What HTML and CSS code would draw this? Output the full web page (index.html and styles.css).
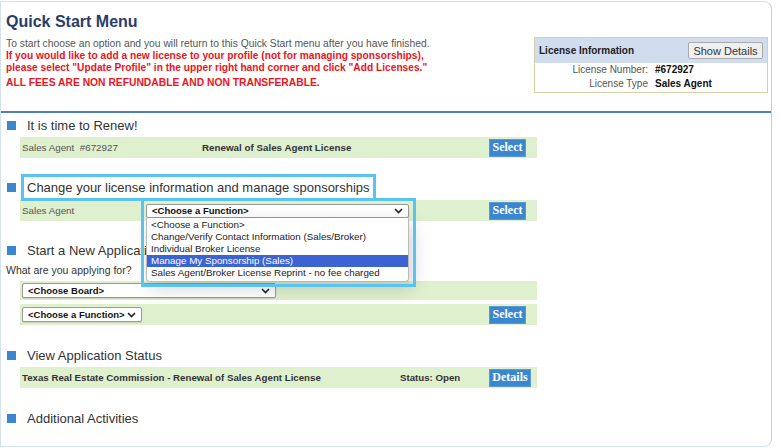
FILE: index.html
```html
<!DOCTYPE html>
<html lang="en">
<head>
  <meta charset="UTF-8">
  <title>Quick Start Menu</title>
  <link rel="stylesheet" href="styles.css">
</head>
<body>
  <div class="panel">
    <div class="top">
      <div class="intro">
        <h1>Quick Start Menu</h1>
        <p class="note">To start choose an option and you will return to this Quick Start menu after you have finished.</p>
        <p class="warn">If you would like to add a new license to your profile (not for managing sponsorships),<br>please select "Update Profile" in the upper right hand corner and click "Add Licenses."</p>
        <p class="warn fees">ALL FEES ARE NON REFUNDABLE AND NON TRANSFERABLE.</p>
      </div>
      <div class="lic-box">
        <div class="lic-head">
          <span>License Information</span>
          <button class="btn-gray">Show Details</button>
        </div>
        <div class="lic-row"><span class="lic-label">License Number:</span><span class="lic-val">#672927</span></div>
        <div class="lic-row"><span class="lic-label">License Type</span><span class="lic-val">Sales Agent</span></div>
      </div>
    </div>

    <!-- Renew -->
    <div class="section first">
      <h2><span class="sq"></span>It is time to Renew!</h2>
      <div class="row">
        <span class="c1">Sales Agent&nbsp;&nbsp;#672927</span>
        <span class="c2 bold">Renewal of Sales Agent License</span>
        <button class="btn-blue">Select</button>
      </div>
    </div>

    <!-- Change license info -->
    <div class="section">
      <h2><span class="sq"></span><span class="hl">Change your license information and manage sponsorships</span></h2>
      <div class="row push">
        <span class="c1 short">Sales Agent</span>
        <div class="pick-wrap">
          <div class="pick wide"><span>&lt;Choose a Function&gt;</span><svg width="9" height="6" viewBox="0 0 9 6"><path d="M1 1l3.5 3.5L8 1" fill="none" stroke="#222" stroke-width="1.6"/></svg></div>
          <ul class="drop">
            <li>&lt;Choose a Function&gt;</li>
            <li>Change/Verify Contact Information (Sales/Broker)</li>
            <li>Individual Broker License</li>
            <li class="on">Manage My Sponsorship (Sales)</li>
            <li>Sales Agent/Broker License Reprint - no fee charged</li>
          </ul>
          <div class="hl-box"></div>
        </div>
        <span class="c2"></span>
        <button class="btn-blue">Select</button>
      </div>
    </div>

    <!-- New application -->
    <div class="section">
      <h2><span class="sq"></span>Start a New Application</h2>
      <p class="ask">What are you applying for?</p>
      <div class="row thin">
        <div class="pick board"><span>&lt;Choose Board&gt;</span><svg width="9" height="6" viewBox="0 0 9 6"><path d="M1 1l3.5 3.5L8 1" fill="none" stroke="#222" stroke-width="1.6"/></svg></div>
      </div>
      <div class="row gap">
        <div class="pick func"><span>&lt;Choose a Function&gt;</span><svg width="9" height="6" viewBox="0 0 9 6"><path d="M1 1l3.5 3.5L8 1" fill="none" stroke="#222" stroke-width="1.6"/></svg></div>
        <span class="c2"></span>
        <button class="btn-blue">Select</button>
      </div>
    </div>

    <!-- Status -->
    <div class="section spaced">
      <h2><span class="sq"></span>View Application Status</h2>
      <div class="row">
        <span class="c-app bold">Texas Real Estate Commission - Renewal of Sales Agent License</span>
        <span class="c-status bold">Status: Open</span>
        <button class="btn-blue details">Details</button>
      </div>
    </div>

    <div class="section spaced">
      <h2><span class="sq"></span>Additional Activities</h2>
    </div>
  </div>
</body>
</html>
```

FILE: styles.css
```css
body {
  margin: 0;
  background-color: #fff;
  font-family: "Liberation Sans", Arial, sans-serif;
  color: #333;
}
.panel {
  width: 770px;
  height: 444px;
  margin-top: 1px;
  border: 1px solid #d3e2ee;
  border-right-color: #c7ced6;
  border-radius: 0 8px 8px 0;
}
.top {
  display: flex;
  justify-content: space-between;
  height: 109px;
  border-bottom: 2px solid #4f7fb3;
}
.intro {
  padding-left: 5px;
}
h1 {
  margin: 11px 0 0;
  font-size: 16px;
  line-height: 18px;
  color: #2a3d6a;
}
.note {
  margin: 7px 0 0;
  font-size: 10.3px;
  line-height: 12px;
  color: #555;
}
.warn {
  margin: 0;
  font-size: 10.2px;
  line-height: 11.5px;
  font-weight: bold;
  color: #ec1420;
}
.fees {
  margin-top: 4px;
  font-size: 10.3px;
}
.lic-box {
  width: 232px;
  height: 54px;
  margin: 35px 3px 0 0;
  border: 1px solid #d9d0a6;
  font-size: 10px;
}
.lic-head {
  display: flex;
  justify-content: space-between;
  align-items: center;
  height: 25px;
  padding: 0 4px 0 4px;
  background-color: #cfddef;
  font-weight: bold;
  color: #222;
}
.btn-gray {
  width: 75px;
  height: 17px;
  padding: 0;
  border: 1px solid #aaa;
  border-radius: 2px;
  background-color: #efefef;
  font-family: "Liberation Sans", Arial, sans-serif;
  font-size: 11px;
  color: #333;
}
.lic-row {
  display: flex;
  height: 14px;
  line-height: 14px;
}
.lic-label {
  width: 113px;
  text-align: right;
  color: #555;
}
.lic-val {
  margin-left: 7px;
  font-weight: bold;
  color: #111;
}
.section {
  margin-top: 20px;
}
.section.first {
  margin-top: 3px;
}
.section.spaced {
  margin-top: 21px;
}
h2 {
  display: flex;
  align-items: center;
  margin: 0 0 3px;
  height: 18px;
  font-size: 13px;
  font-weight: normal;
  color: #333;
}
.sq {
  width: 9px;
  height: 9px;
  margin: 0 11px 0 6px;
  background-color: #3a86d1;
}
.hl {
  position: relative;
  z-index: 2;
  outline: 3px solid #5bc3ef;
  outline-offset: 3px;
}
.row {
  display: flex;
  align-items: center;
  width: 515px;
  height: 21px;
  margin-left: 19px;
  padding-left: 2px;
  background-color: #dff0cf;
  font-size: 9.8px;
  color: #555;
}
.row.push {
  margin-top: 4px;
}
.row.thin {
  height: 19px;
}
.row.gap {
  margin-top: 4px;
}
.bold {
  font-weight: bold;
  color: #333;
}
.c1 {
  width: 180px;
}
.c1.short {
  width: 124px;
}
.c2 {
  flex: 1;
}
.c-app {
  width: 378px;
  font-size: 9.7px;
}
.c-status {
  flex: 1;
  font-size: 9.7px;
}
.btn-blue {
  width: 37px;
  height: 18px;
  margin-right: 11px;
  padding: 0;
  border: 1px solid #5a9bd6;
  background-color: #3a87cf;
  font-family: "Liberation Serif", "Times New Roman", serif;
  font-size: 12px;
  font-weight: bold;
  color: #fff;
}
.btn-blue.details {
  width: 42px;
  margin-right: 6px;
}
.ask {
  margin: 3px 0 3px 5px;
  font-size: 10.5px;
  line-height: 16px;
  color: #333;
}
.pick-wrap {
  position: relative;
}
.pick {
  display: flex;
  flex: none;
  justify-content: space-between;
  align-items: center;
  box-sizing: border-box;
  height: 15px;
  padding: 0 5px 0 5px;
  border: 1px solid #9a9a9a;
  border-radius: 2px;
  background-color: #fff;
  box-shadow: 0 1px 1px rgba(0, 0, 0, 0.12);
  font-size: 9.5px;
  font-weight: bold;
  white-space: nowrap;
  color: #111;
}
.pick.wide {
  width: 263px;
  height: 14px;
}
.pick.board {
  width: 254px;
}
.pick.func {
  width: 120px;
}
.drop {
  position: absolute;
  top: 14px;
  left: 0;
  z-index: 3;
  box-sizing: border-box;
  width: 263px;
  margin: 0;
  padding: 1px 0 2px;
  list-style-type: none;
  border: 1px solid #bbb;
  border-top: none;
  border-radius: 0 0 4px 4px;
  background-color: #fff;
  box-shadow: 4px 6px 18px rgba(0, 0, 0, 0.18);
  font-size: 9.8px;
  color: #222;
}
.drop li {
  height: 12px;
  line-height: 12px;
  padding-left: 4px;
}
.drop li.on {
  background-color: #3c63d4;
  color: #fff;
}
.hl-box {
  position: absolute;
  top: -6px;
  left: -5px;
  z-index: 4;
  box-sizing: border-box;
  width: 275px;
  height: 89px;
  border: 3px solid #5bc3ef;
}
```
